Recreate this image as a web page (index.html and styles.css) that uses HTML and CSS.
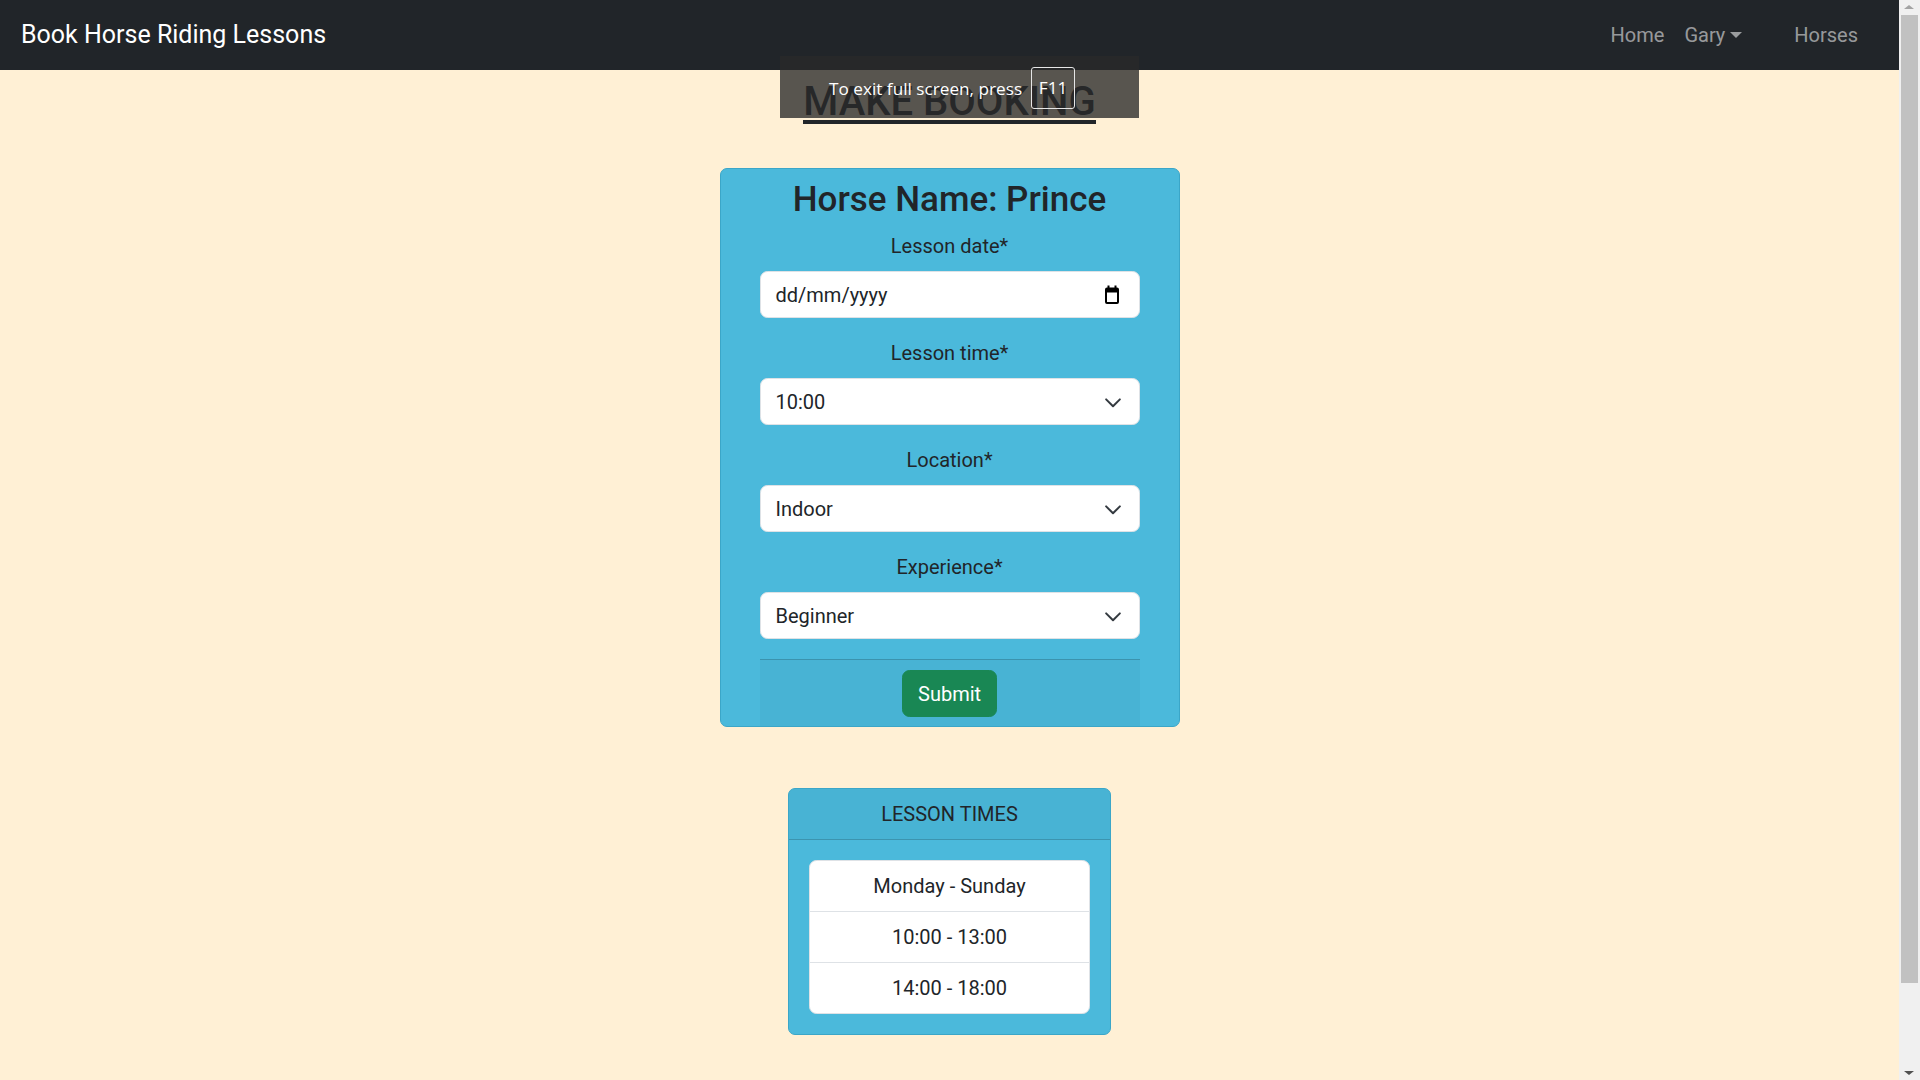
FILE: index.html
```html
<!DOCTYPE html>
<html lang="en">
<head>
<meta charset="utf-8">
<title>Book Horse Riding Lessons</title>
<link rel="stylesheet" href="styles.css">
</head>
<body>
<nav class="navbar">
  <a class="brand" href="#">Book Horse Riding Lessons</a>
  <ul class="nav-links">
    <li><a class="nav-link" href="#">Home</a></li>
    <li><a class="nav-link dropdown-toggle" href="#">Gary</a></li>
    <li class="nav-gap"><a class="nav-link" href="#">Horses</a></li>
  </ul>
</nav>

<div class="fs-toast">
  <span class="fs-text">To exit full screen, press</span>
  <span class="fs-key">F11</span>
</div>

<main class="page">
  <h2 class="page-title">MAKE BOOKING</h2>

  <form class="card booking-card">
    <h3 class="horse-name">Horse Name: Prince</h3>

    <div class="field">
      <label class="form-label">Lesson date*</label>
      <div class="form-control date-input">
        <span>dd/mm/yyyy</span>
        <svg class="cal-icon" width="14" height="19" viewBox="0 0 14 19" aria-hidden="true">
          <rect x="1" y="3.5" width="12" height="14.5" rx="1" fill="none" stroke="#000" stroke-width="2"/>
          <rect x="1" y="3.5" width="12" height="4" fill="#000"/>
          <line x1="3.5" y1="0.5" x2="3.5" y2="4" stroke="#000" stroke-width="2"/>
          <line x1="10.5" y1="0.5" x2="10.5" y2="4" stroke="#000" stroke-width="2"/>
        </svg>
      </div>
    </div>

    <div class="field">
      <label class="form-label">Lesson time*</label>
      <div class="form-control form-select"><span>10:00</span><svg class="chev" width="20" height="15" viewBox="0 0 16 12"><path d="m2.5 3.5 5.5 5.5 5.5-5.5" fill="none" stroke="#343a40" stroke-width="1.6" stroke-linecap="round" stroke-linejoin="round"/></svg></div>
    </div>

    <div class="field">
      <label class="form-label">Location*</label>
      <div class="form-control form-select"><span>Indoor</span><svg class="chev" width="20" height="15" viewBox="0 0 16 12"><path d="m2.5 3.5 5.5 5.5 5.5-5.5" fill="none" stroke="#343a40" stroke-width="1.6" stroke-linecap="round" stroke-linejoin="round"/></svg></div>
    </div>

    <div class="field">
      <label class="form-label">Experience*</label>
      <div class="form-control form-select"><span>Beginner</span><svg class="chev" width="20" height="15" viewBox="0 0 16 12"><path d="m2.5 3.5 5.5 5.5 5.5-5.5" fill="none" stroke="#343a40" stroke-width="1.6" stroke-linecap="round" stroke-linejoin="round"/></svg></div>
    </div>

    <div class="card-footer">
      <button type="button" class="btn-submit">Submit</button>
    </div>
  </form>

  <section class="card times-card">
    <div class="card-header">LESSON TIMES</div>
    <div class="times-body">
      <ul class="list-group">
        <li class="list-item">Monday - Sunday</li>
        <li class="list-item">10:00 - 13:00</li>
        <li class="list-item">14:00 - 18:00</li>
      </ul>
    </div>
  </section>
</main>

<div class="scrollbar" aria-hidden="true">
  <span class="sb-arrow sb-up"></span>
  <span class="sb-thumb"></span>
  <span class="sb-arrow sb-down"></span>
</div>
</body>
</html>
```
FILE: styles.css
```css
* { box-sizing: border-box; }

html { background: #fff0d5; }

body {
  margin: 0 21px 0 0;
  background: #fff0d5;
  font-family: Roboto, "Liberation Sans", sans-serif;
  font-size: 20px;
  line-height: 1.5;
  color: #212529;
}

.navbar {
  height: 70px;
  background: #212529;
  display: flex;
  align-items: center;
  justify-content: space-between;
  padding: 0 31px 0 21px;
}

.brand {
  color: #fff;
  font-size: 25px;
  text-decoration: none;
  line-height: 1.5;
}

.nav-links {
  list-style: none;
  margin: 0;
  padding: 0;
  display: flex;
  align-items: center;
}

.nav-link {
  display: block;
  padding: 10px 10px;
  color: rgba(255, 255, 255, 0.55);
  text-decoration: none;
}

.dropdown-toggle::after {
  content: "";
  display: inline-block;
  margin-left: 5px;
  vertical-align: 4px;
  border-top: 6px solid;
  border-left: 6px solid transparent;
  border-right: 6px solid transparent;
}

.nav-gap { margin-left: 32px; }

/* browser full-screen notice, drawn over the page */
.fs-toast {
  position: absolute;
  top: 56px;
  left: 780px;
  width: 359px;
  height: 62px;
  background: rgba(41, 41, 41, 0.78);
  display: flex;
  align-items: center;
  gap: 9px;
  padding-left: 49px;
  color: #fff;
  font-family: "Open Sans", "Noto Sans", sans-serif;
  font-size: 17.2px;
  z-index: 10;
}

.fs-text { margin-top: 3px; }

.fs-key {
  display: flex;
  align-items: center;
  justify-content: center;
  width: 44px;
  height: 42px;
  margin-top: 2px;
  border: 1px solid #e6e6e6;
  border-radius: 3px;
}

/* browser scrollbar (window chrome) */
.scrollbar {
  position: fixed;
  top: 0;
  right: 0;
  width: 21px;
  height: 100vh;
  background: #f0f0f0;
}

.sb-thumb {
  position: absolute;
  top: 15px;
  left: 2px;
  width: 17px;
  height: 968px;
  background: #c1c1c1;
}

.sb-arrow {
  position: absolute;
  left: 5px;
  width: 0;
  height: 0;
  border-left: 5px solid transparent;
  border-right: 5px solid transparent;
}

.sb-up { top: 5px; border-bottom: 4px solid #a3a3a3; }

.sb-down { bottom: 5px; border-top: 4px solid #505050; }

.page {
  display: flex;
  flex-direction: column;
  align-items: center;
  padding: 14px 0 123px;
}

.page-title {
  display: inline-block;
  margin: 0;
  font-size: 40px;
  font-weight: 500;
  line-height: 36px;
  border-bottom: 4px solid #212529;
}

.card {
  background: #4bb9db;
  border: 1px solid #3ba6c8;
  border-radius: 7px;
}

.booking-card {
  width: 460px;
  margin-top: 44px;
  padding: 10px 39px 0;
  text-align: center;
}

.horse-name {
  margin: 0 0 10px;
  font-size: 35px;
  font-weight: 500;
  line-height: 1.2;
}

.field { margin-bottom: 20px; }

.form-label {
  display: block;
  margin-bottom: 10px;
}

.form-control {
  display: flex;
  align-items: center;
  justify-content: space-between;
  height: 47px;
  padding: 7.5px 15px;
  background: #fff;
  border: 1px solid #dee2e6;
  border-radius: 7.5px;
  text-align: left;
  line-height: 30px;
}

.date-input { padding-right: 20px; }

.form-select { padding-right: 15px; }

.chev { margin-right: 1px; margin-top: 1px; }

.card-footer {
  background: rgba(0, 0, 0, 0.03);
  border-top: 1px solid rgba(0, 0, 0, 0.175);
  padding: 10px 20px 9px;
  display: flex;
  justify-content: center;
}

.btn-submit {
  font-family: inherit;
  font-size: 20px;
  line-height: 30px;
  color: #fff;
  background: #198754;
  border: 1px solid #198754;
  border-radius: 7.5px;
  padding: 7.5px 15px;
  width: 95px;
  height: 47px;
}

.times-card {
  width: 323px;
  margin-top: 61px;
  text-align: center;
}

.card-header {
  padding: 10px 20px;
  background: rgba(0, 0, 0, 0.03);
  border-bottom: 1px solid rgba(0, 0, 0, 0.175);
  border-radius: 6px 6px 0 0;
}

.times-body { padding: 20px; }

.list-group {
  list-style: none;
  margin: 0;
  padding: 0;
  background: #fff;
  border: 1px solid #dee2e6;
  border-radius: 7.5px;
}

.list-item {
  padding: 10px 20px;
  border-top: 1px solid #dee2e6;
}

.list-item:first-child { border-top: 0; }
```
